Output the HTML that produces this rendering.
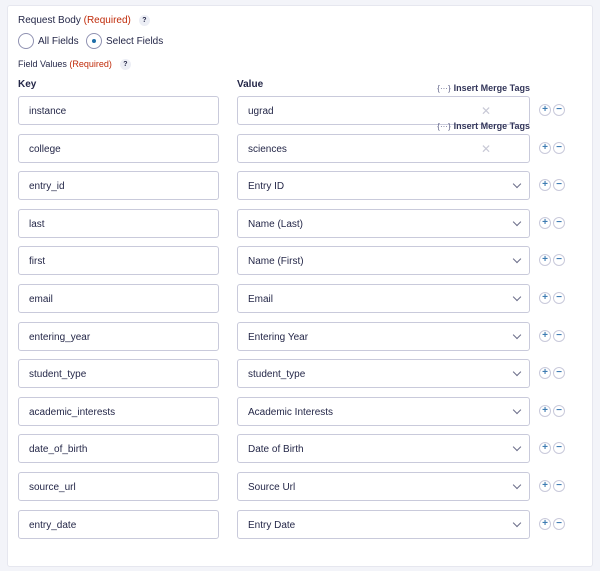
<!DOCTYPE html>
<html><head><style>
body{margin:0;width:600px;height:571px;background:#f3f4f9;font-family:"Liberation Sans",sans-serif;color:#242748;position:relative;overflow:hidden}
.card{position:absolute;left:7px;top:5px;width:586px;height:562px;background:#fff;border:1px solid #e6e7ef;border-radius:3px;box-sizing:border-box}
.t{position:absolute;font-size:10px;white-space:nowrap}
.req{color:#c02b0a}
.q{display:inline-block;width:11px;height:11px;border-radius:50%;background:#eceef5;font-size:7px;text-align:center;line-height:11px;vertical-align:middle;margin-left:8px;font-weight:bold}
.radio{position:absolute;width:16px;height:16px;border:1px solid #9092b2;border-radius:50%;box-sizing:border-box;background:#fff}
.in{position:absolute;height:29px;border:1px solid #c9cadb;border-radius:3px;box-sizing:border-box;font-size:10px;line-height:29px;padding-left:10px;background:#fff}
.k{left:18px;width:201px}
.v{left:237px;width:293px}
.chev{position:absolute;right:9px;top:9px;width:5px;height:5px;border-right:1px solid #6b6d8a;border-bottom:1px solid #6b6d8a;transform:rotate(45deg)}
.x{position:absolute;right:38px;top:0;color:#c8c9d6;font-size:12px}
.btn{position:absolute;width:12px;height:12px;border:1px solid #c9cadb;border-radius:50%;box-sizing:border-box;font-size:10px;line-height:10px;text-align:center;color:#3e7cb2;font-weight:bold}
.mt{position:absolute;right:70px;font-size:9px;white-space:nowrap;font-weight:bold;color:#33365a}
.mt span{color:#5b5e85;font-size:8px;margin-right:3px;font-weight:normal}
</style></head><body>
<div class="card"></div>
<div class="t" style="left:18px;top:15px">Request Body <span class="req">(Required)</span><span class="q">?</span></div>
<div class="radio" style="left:18px;top:33px"></div>
<div class="t" style="left:38px;top:36px">All Fields</div>
<div class="radio" style="left:86px;top:33px"><div style="position:absolute;left:5px;top:5px;width:4px;height:4px;border-radius:50%;background:#1f6ea8"></div></div>
<div class="t" style="left:106px;top:36px">Select Fields</div>
<div class="t" style="left:18px;top:59px;font-size:9px">Field Values <span class="req">(Required)</span><span class="q">?</span></div>
<div class="t" style="left:18px;top:79px;font-weight:bold">Key</div>
<div class="t" style="left:237px;top:79px;font-weight:bold">Value</div>
<div id="rows"></div>
<div class="mt" style="top:83px"><span>{···}</span>Insert Merge Tags</div>
<div class="mt" style="top:121px"><span>{···}</span>Insert Merge Tags</div>
<script>
var r=[["instance","ugrad",1],["college","sciences",1],["entry_id","Entry ID"],["last","Name (Last)"],["first","Name (First)"],["email","Email"],["entering_year","Entering Year"],["student_type","student_type"],["academic_interests","Academic Interests"],["date_of_birth","Date of Birth"],["source_url","Source Url"],["entry_date","Entry Date"]];
var h="";r.forEach(function(e,i){var y=Math.round(96+i*37.6);
h+='<div class="in k" style="top:'+y+'px">'+e[0]+'</div><div class="in v" style="top:'+y+'px">'+e[1]+(e[2]?'<span class="x">✕</span>':'<span class="chev"></span>')+'</div>';
h+='<div class="btn" style="left:539px;top:'+(y+8)+'px">+</div><div class="btn" style="left:553px;top:'+(y+8)+'px">−</div>';});
document.getElementById("rows").innerHTML=h;
</script>
</body></html>
